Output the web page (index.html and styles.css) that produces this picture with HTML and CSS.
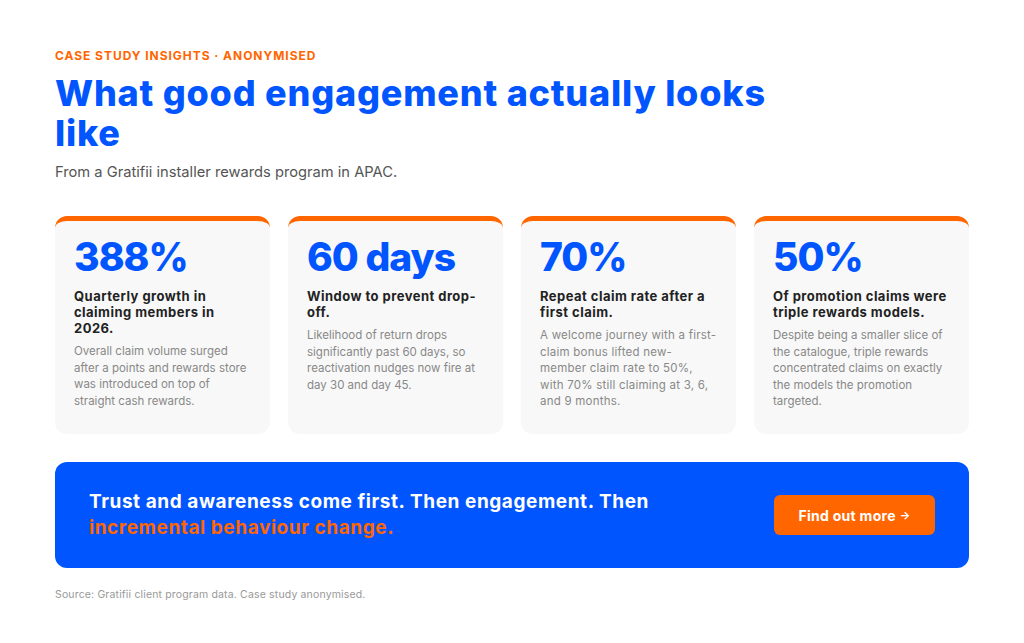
FILE: index.html
```html
<!DOCTYPE html>
<html lang="en">
<head>
<meta charset="utf-8">
<title>Case study insights</title>
<link rel="stylesheet" href="styles.css">
</head>
<body>
<main class="page">
  <header class="intro">
    <p class="eyebrow">Case study insights · Anonymised</p>
    <h1 class="title">What good engagement actually looks like</h1>
    <p class="subtitle">From a Gratifii installer rewards program in APAC.</p>
  </header>

  <section class="cards">
    <article class="card">
      <div class="stat">388%</div>
      <h2 class="card-title">Quarterly growth in claiming members in 2026.</h2>
      <p class="card-text">Overall claim volume surged after a points and rewards store was introduced on top of straight cash rewards.</p>
    </article>
    <article class="card">
      <div class="stat">60 days</div>
      <h2 class="card-title">Window to prevent drop-off.</h2>
      <p class="card-text">Likelihood of return drops significantly past 60 days, so reactivation nudges now fire at day 30 and day 45.</p>
    </article>
    <article class="card">
      <div class="stat">70%</div>
      <h2 class="card-title">Repeat claim rate after a first claim.</h2>
      <p class="card-text card-text-loose">A welcome journey with a first-claim bonus lifted new-member claim rate to 50%, with 70% still claiming at 3, 6, and 9 months.</p>
    </article>
    <article class="card">
      <div class="stat">50%</div>
      <h2 class="card-title">Of promotion claims were triple rewards models.</h2>
      <p class="card-text">Despite being a smaller slice of the catalogue, triple rewards concentrated claims on exactly the models the promotion targeted.</p>
    </article>
  </section>

  <section class="banner">
    <p class="banner-text">Trust and awareness come first. Then engagement. Then <span class="accent">incremental behaviour change.</span></p>
    <a class="btn" href="#">Find out more <span class="arrow">→</span></a>
  </section>

  <p class="source">Source: Gratifii client program data. Case study anonymised.</p>
</main>
</body>
</html>
```

FILE: styles.css
```css
* { box-sizing: border-box; }

html, body {
  margin: 0;
  padding: 0;
  background: #ffffff;
}

body {
  font-family: "Inter", "Open Sans", sans-serif;
  color: #222222;
}

.page {
  padding: 48px 55px 0 55px;
  display: flex;
  flex-direction: column;
}

.intro {
  display: flex;
  flex-direction: column;
}

.eyebrow {
  margin: 0;
  font-size: 12px;
  line-height: 16px;
  font-weight: 700;
  letter-spacing: 0.08em;
  text-transform: uppercase;
  color: #ff6600;
}

.title {
  margin: 9px 0 0 0;
  max-width: 780px;
  font-size: 36px;
  line-height: 40px;
  font-weight: 800;
  letter-spacing: 0.022em;
  color: #0055ff;
}

.subtitle {
  margin: 9px 0 0 0;
  font-size: 14.7px;
  line-height: 20px;
  color: #555555;
}

.cards {
  margin-top: 34px;
  display: grid;
  grid-template-columns: repeat(4, 1fr);
  gap: 18px;
}

.card {
  background: #f8f8f8;
  border-top: 5px solid #ff6600;
  border-radius: 12px;
  padding: 14px 19px 20px 19px;
  min-height: 218px;
}

.stat {
  font-size: 39px;
  line-height: 44px;
  font-weight: 800;
  color: #0055ff;
  letter-spacing: -0.025em;
}

.card-title {
  margin: 9px 0 0 0;
  font-size: 13px;
  line-height: 16px;
  font-weight: 700;
  letter-spacing: 0.036em;
  color: #222222;
}

.card-text {
  margin: 7px 0 0 0;
  font-size: 11.5px;
  line-height: 16.6px;
  letter-spacing: 0;
  color: #888888;
}

.card-text-loose {
  letter-spacing: 0.02em;
}

.banner {
  margin-top: 28px;
  background: #0055ff;
  border-radius: 12px;
  height: 106px;
  padding: 0 34px 0 34px;
  display: flex;
  align-items: center;
  justify-content: space-between;
}

.banner-text {
  margin: 0;
  max-width: 600px;
  font-size: 19px;
  line-height: 26px;
  font-weight: 700;
  letter-spacing: 0.03em;
  color: #ffffff;
}

.accent {
  color: #ff6600;
}

.btn {
  display: inline-flex;
  align-items: center;
  justify-content: center;
  width: 161px;
  height: 40px;
  background: #ff6600;
  color: #ffffff;
  border-radius: 6px;
  font-size: 14px;
  font-weight: 700;
  letter-spacing: 0.02em;
  text-decoration: none;
  gap: 4px;
}

.arrow {
  font-size: 11px;
}

.source {
  margin: 20px 0 0 0;
  font-size: 10.5px;
  line-height: 14px;
  letter-spacing: 0.015em;
  color: #999999;
}
```
